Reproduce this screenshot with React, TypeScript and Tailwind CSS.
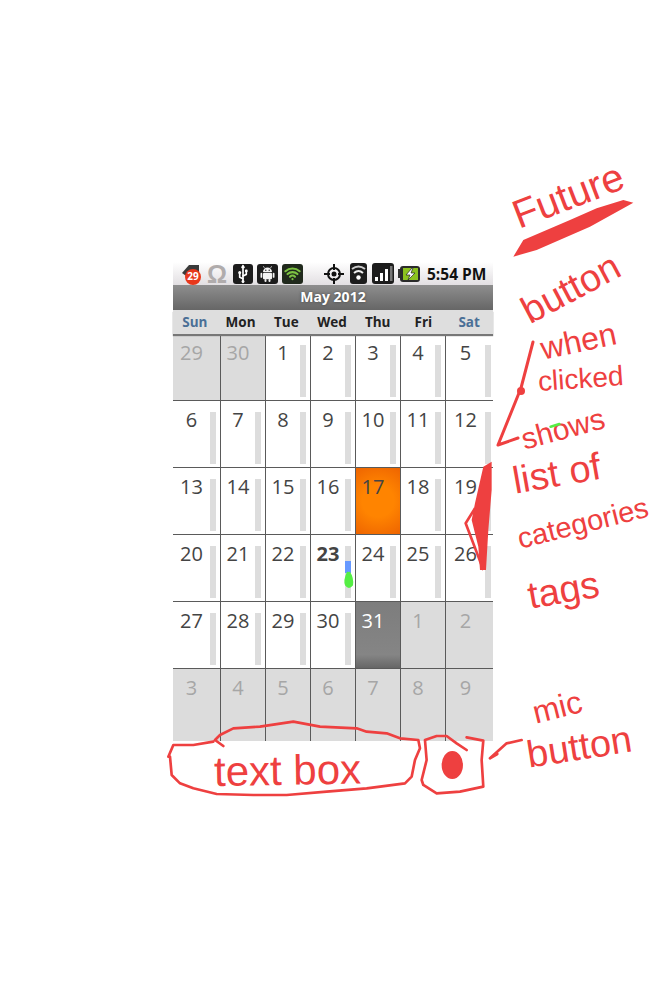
import { Usb, Wifi } from "lucide-react";

interface DayProps {
  day: number;
  muted?: boolean;
  bar?: boolean;
  kind?: "today" | "picked" | "now";
}

const rows: DayProps[][] = [
  [
    { day: 29, muted: true },
    { day: 30, muted: true },
    { day: 1, bar: true },
    { day: 2, bar: true },
    { day: 3, bar: true },
    { day: 4, bar: true },
    { day: 5, bar: true },
  ],
  [6, 7, 8, 9, 10, 11, 12].map((day) => ({ day, bar: true })),
  [
    { day: 13, bar: true },
    { day: 14, bar: true },
    { day: 15, bar: true },
    { day: 16, bar: true },
    { day: 17, kind: "today" },
    { day: 18, bar: true },
    { day: 19, bar: true },
  ],
  [
    { day: 20, bar: true },
    { day: 21, bar: true },
    { day: 22, bar: true },
    { day: 23, bar: true, kind: "now" },
    { day: 24, bar: true },
    { day: 25, bar: true },
    { day: 26, bar: true },
  ],
  [
    { day: 27, bar: true },
    { day: 28, bar: true },
    { day: 29, bar: true },
    { day: 30, bar: true },
    { day: 31, kind: "picked" },
    { day: 1, muted: true },
    { day: 2, muted: true },
  ],
  [3, 4, 5, 6, 7, 8, 9].map((day) => ({ day, muted: true })),
];

const weekdays = ["Sun", "Mon", "Tue", "Wed", "Thu", "Fri", "Sat"];

function Day({ day, muted, bar, kind, last, lastRow }: DayProps & { last: boolean; lastRow: boolean }) {
  let bg = "bg-white";
  if (muted) bg = "bg-[#dcdcdc]";
  if (kind === "today") bg = "bg-[radial-gradient(circle,#ff8400_40%,#ee6400_100%)]";
  if (kind === "picked") bg = "bg-[linear-gradient(#7d7d7d_0%,#858585_80%,#666666_100%)]";

  let color = "text-[#444444]";
  if (muted) color = "text-[#a6a6a6]";
  if (kind === "picked") color = "text-white";

  return (
    <div className={`flex ${bg} ${last ? "" : "border-r border-[#5a5a5a]"} ${lastRow ? "" : "border-b border-[#5a5a5a]"}`}>
      <div className={`flex-1 pt-[5px] text-center text-[20px] leading-[27px] ${color} ${kind === "now" ? "font-bold" : ""}`}>
        {day}
      </div>
      <div className={`mt-[11px] h-[52px] w-[6px] ${last ? "mr-[2px]" : "mr-[4px]"} ${bar ? "bg-[#dddddd]" : ""}`}>
        {kind === "now" && <div className="mt-[15px] h-[12px] w-[6px] bg-[#6699ff]" />}
      </div>
    </div>
  );
}

function StatusBar() {
  return (
    <div className="flex h-[23px] items-center bg-[linear-gradient(#ffffff,#e2dfe2)] pl-[9px]">
      <div className="relative h-[20px] w-[19px]">
        <svg width="19" height="20" viewBox="0 0 19 20">
          <path d="M0 9 L7 1 H17 V14 H7 Z" fill="#3a3a3a" />
        </svg>
        <span className="absolute left-[3px] top-[5px] flex h-[16px] w-[16px] items-center justify-center rounded-full bg-[#e8381c] text-[10px] font-bold text-white">
          29
        </span>
      </div>
      <span className="ml-[6px] w-[20px] text-center font-['Liberation_Sans',sans-serif] text-[25px] font-bold leading-[22px] text-[#b0acac]">Ω</span>
      <div className="ml-[6px] flex h-[20px] w-[20px] items-center justify-center rounded-[3px] bg-[#1c1c1c]">
        <Usb size={16} color="#ffffff" strokeWidth={2.5} className="rotate-[-45deg]" />
      </div>
      <div className="ml-[4px] flex h-[20px] w-[21px] items-center justify-center rounded-[3px] bg-[#1c1c1c]">
        <svg width="17" height="17" viewBox="0 0 17 17">
          <path d="M4 7 A4.5 4.5 0 0 1 13 7 Z" fill="#f2f2f2" />
          <rect x="4" y="7.8" width="9" height="6.5" rx="1" fill="#f2f2f2" />
          <rect x="1.5" y="7.8" width="1.8" height="5" rx="0.9" fill="#f2f2f2" />
          <rect x="13.7" y="7.8" width="1.8" height="5" rx="0.9" fill="#f2f2f2" />
          <rect x="5.5" y="14" width="2" height="3" rx="1" fill="#f2f2f2" />
          <rect x="9.5" y="14" width="2" height="3" rx="1" fill="#f2f2f2" />
          <circle cx="6.8" cy="5.2" r="0.7" fill="#1c1c1c" />
          <circle cx="10.2" cy="5.2" r="0.7" fill="#1c1c1c" />
          <path d="M5.5 3 L4.3 1.2 M11.5 3 L12.7 1.2" stroke="#f2f2f2" strokeWidth="0.7" />
        </svg>
      </div>
      <div className="ml-[4px] flex h-[20px] w-[21px] items-center justify-center rounded-[3px] bg-[#20291c]">
        <Wifi size={17} color="#7cc242" strokeWidth={3} />
      </div>
      <svg className="ml-[21px]" width="20" height="20" viewBox="0 0 20 20">
        <circle cx="10" cy="10" r="6" fill="none" stroke="#111111" strokeWidth="2" />
        <circle cx="10" cy="10" r="2.5" fill="#111111" />
        <path d="M10 0V6M10 14V20M0 10H6M14 10H20" stroke="#111111" strokeWidth="2" />
      </svg>
      <svg className="ml-[6px]" width="17" height="21" viewBox="0 0 17 21">
        <rect width="17" height="21" rx="3" fill="#1c1c1c" />
        <path d="M2 6 Q8.5 1 15 6" fill="none" stroke="#cccccc" strokeWidth="2" />
        <path d="M4 10 Q8.5 6 13 10" fill="none" stroke="#eeeeee" strokeWidth="2" />
        <circle cx="8.5" cy="14.5" r="2.2" fill="#ffffff" />
      </svg>
      <svg className="ml-[5px]" width="22" height="21" viewBox="0 0 22 21">
        <rect width="22" height="21" rx="3" fill="#1c1c1c" />
        <rect x="3" y="14" width="3" height="4" fill="#ffffff" />
        <rect x="8" y="10" width="3" height="8" fill="#ffffff" />
        <rect x="13" y="6" width="3" height="12" fill="#ffffff" />
        <rect x="18" y="3" width="2.5" height="15" fill="#777777" />
      </svg>
      <svg className="ml-[4px]" width="22" height="16" viewBox="0 0 22 16">
        <rect x="0" y="3" width="3" height="9" fill="#333333" />
        <rect x="2" y="0" width="20" height="16" rx="3" fill="#2a2a2a" />
        <rect x="5" y="2" width="15" height="12" fill="#8cc21f" />
        <path d="M14 2 L8 9 H12 L10 14 L17 7 H13 L15 2 Z" fill="#ffffff" stroke="#222222" strokeWidth="0.7" />
      </svg>
      <span className="ml-[7px] whitespace-nowrap text-[15.5px] font-bold leading-[20px] text-[#111111]">5:54 PM</span>
    </div>
  );
}

// the red pen marks that are not words: arrows, underline, boxes
function PenMarks() {
  return (
    <svg className="pointer-events-none absolute left-0 top-0" width="667" height="1000" viewBox="0 0 667 1000" fill="none">
      <g transform="translate(160 660) scale(0.3333)" stroke="#ee4040" strokeWidth="8" strokeLinejoin="round" strokeLinecap="round">
        <path d="M190 258 L165 240 L180 225 L220 205 L300 200 L400 185 L480 200 L590 205 L620 215 L680 220 L720 235 L775 240 L780 265 L765 300 L755 350 L735 370 L620 385 L500 395 L380 405 L280 405 L170 402 L100 385 L60 370 L35 345 L30 290 L25 290 L40 255 L100 255 L160 245" />
        <path d="M920 232 L970 242 L965 300 L970 380 L900 395 L830 400 L790 375 L785 360 L800 300 L795 240 L830 228 L860 228 L890 250 L920 270" />
        <ellipse cx="877" cy="315" rx="28" ry="38" fill="#ee4040" />
        <path d="M1085 240 L1040 250 L990 295 L1012 282" />
      </g>
      <g transform="translate(490 150) scale(0.3333)">
        <path d="M70 320 L100 270 L240 210 L320 175 L400 150 L430 158 L300 230 L140 300 Z" fill="#ee4040" />
      </g>
      <path d="M533 342 L521 388 L498 445 L518 438" stroke="#ee4040" strokeWidth="3" strokeLinejoin="round" strokeLinecap="round" />
      <circle cx="521" cy="391" r="4" fill="#ee4040" />
      <g transform="translate(450 380) scale(0.3333)">
        <path d="M100 260 L125 245 L125 330 L115 450 L108 570 L90 570 L85 500 L65 420 L75 370 Z" fill="#ee4040" />
        <path d="M75 385 L47 430 L85 530 L100 570" stroke="#ee4040" strokeWidth="8" strokeLinejoin="round" />
        <path d="M302 140 L328 132" stroke="#55ee44" strokeWidth="8" strokeLinecap="round" />
      </g>
      <path d="M348 572 Q344 581 346 585 Q349 589 352 585 Q353 578 349 572" fill="#55ee44" stroke="#55ee44" strokeWidth="2" />
    </svg>
  );
}

const words = [
  { text: "Future", cls: "left-[514px] top-[196px] text-[40px] rotate-[-21deg]" },
  { text: "button", cls: "left-[524px] top-[294px] text-[38px] rotate-[-28deg]" },
  { text: "when", cls: "left-[541px] top-[333px] text-[32px] rotate-[-12deg]" },
  { text: "clicked", cls: "left-[538px] top-[368px] text-[28px] rotate-[-4deg]" },
  { text: "shows", cls: "left-[522px] top-[425px] text-[30px] rotate-[-15deg]" },
  { text: "list of", cls: "left-[513px] top-[462px] text-[38px] rotate-[-10deg]" },
  { text: "categories", cls: "left-[518px] top-[525px] text-[29px] rotate-[-14deg]" },
  { text: "tags", cls: "left-[528px] top-[577px] text-[38px] rotate-[-10deg]" },
  { text: "text box", cls: "left-[214px] top-[751px] text-[42px] rotate-[-1deg]" },
  { text: "mic", cls: "left-[533px] top-[697px] text-[32px] rotate-[-14deg]" },
  { text: "button", cls: "left-[527px] top-[736px] text-[38px] rotate-[-9deg]" },
];

export default function App() {
  return (
    <div className="relative h-[1000px] w-[667px] overflow-hidden bg-white font-['Open_Sans',sans-serif]">
      <div className="ml-[173px] w-[320px] pt-[262px]">
        <StatusBar />
        <div className="flex h-[25px] items-center justify-center bg-[linear-gradient(#8e8e8e,#666666)] pb-[2px] text-[14px] font-bold text-white [text-shadow:0_0_3px_#444444]">
          May 2012
        </div>
        <div className="relative z-10 h-[24px] bg-[#dedede] shadow-[0_2px_1px_#777777]">
          <div className="ml-[-1px] grid h-[24px] w-[320px] grid-cols-7 items-center text-center text-[13.5px] font-bold text-[#222222]">
            {weekdays.map((name, i) => (
              <div key={name} className={i === 0 || i === 6 ? "text-[#4a6f96]" : ""}>
                {name}
              </div>
            ))}
          </div>
        </div>
        <div className="grid grid-cols-[48px_repeat(5,45px)_47px] grid-rows-[67px_67px_67px_67px_67px_72px]">
          {rows.map((row, r) =>
            row.map((d, c) => <Day key={`${r}-${c}`} {...d} last={c === 6} lastRow={r === 5} />),
          )}
        </div>
      </div>
      {words.map((w) => (
        <span
          key={w.text + w.cls}
          className={`absolute origin-left whitespace-nowrap font-['Liberation_Sans',sans-serif] leading-none text-[#ee4040] ${w.cls}`}
        >
          {w.text}
        </span>
      ))}
      <PenMarks />
    </div>
  );
}
